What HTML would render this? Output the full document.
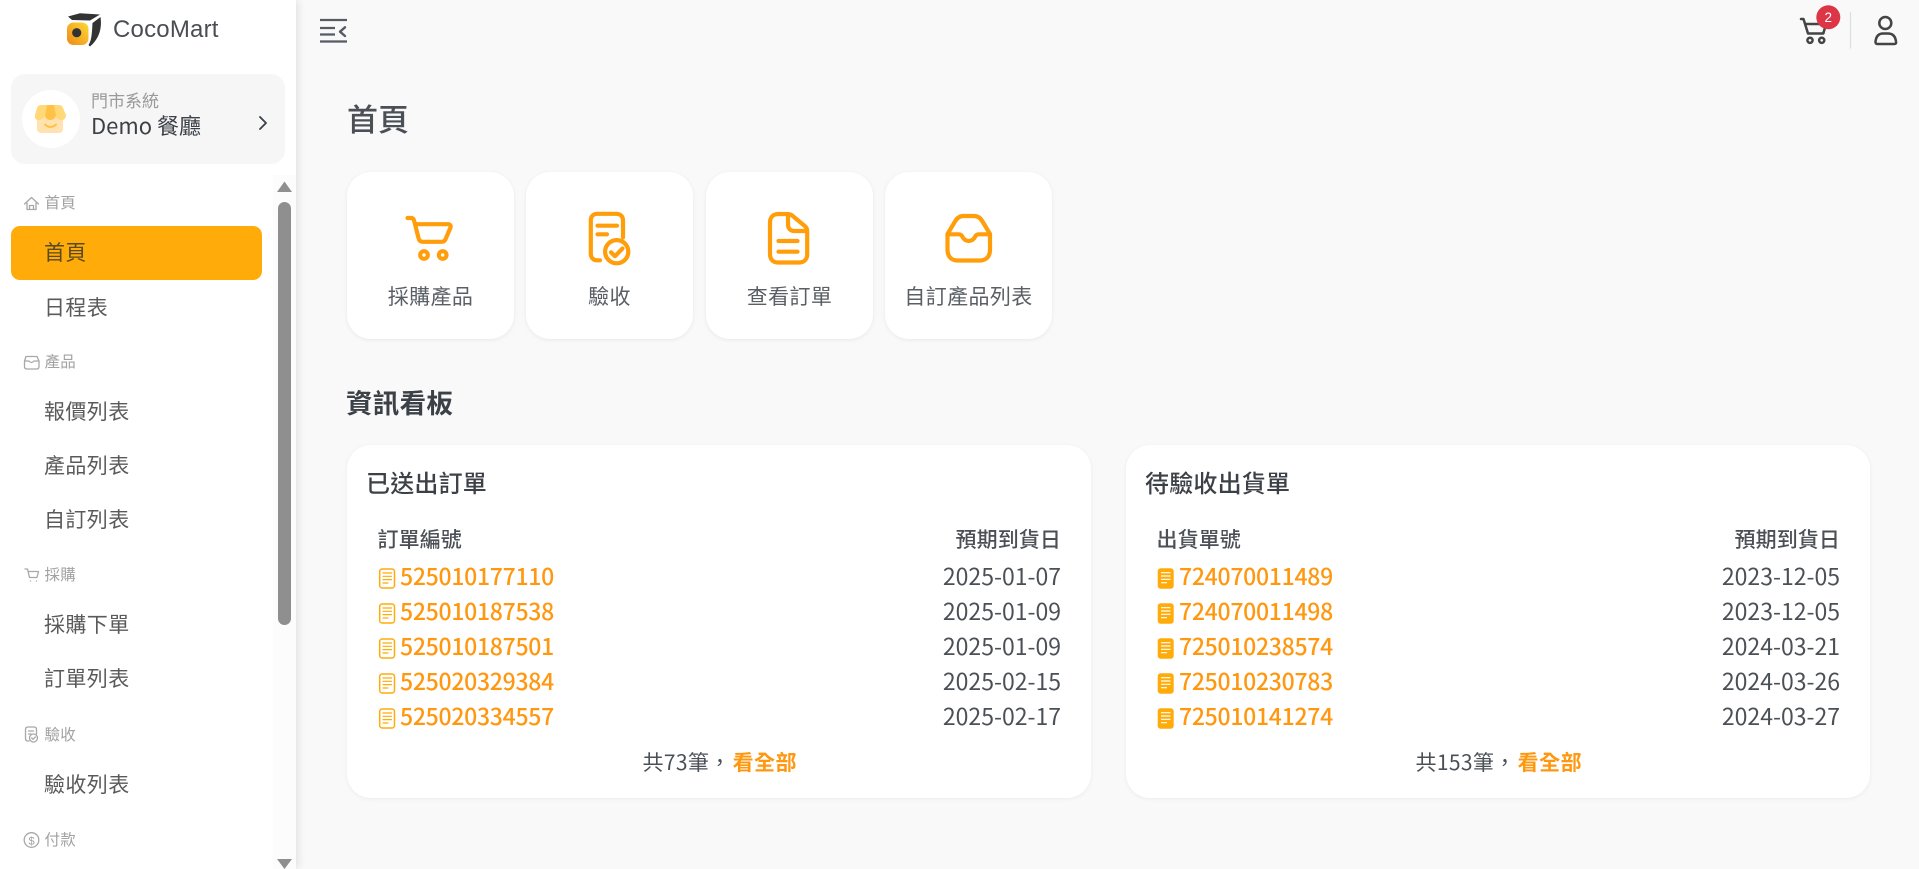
<!DOCTYPE html>
<html lang="zh-Hant"><head><meta charset="utf-8"><title>CocoMart</title>
<style>
html,body{margin:0;padding:0;width:1919px;height:869px;overflow:hidden;background:#f9f9f9}
body{font-family:"Noto Sans CJK TC","Liberation Sans",sans-serif;color:#4b5056;position:relative}
.b{position:absolute}
.t{position:absolute;white-space:nowrap;line-height:1;margin:0;font-weight:400}
.r{text-align:right}
.m{font-size:21px;color:#5a5a5a;left:44px;letter-spacing:.4px}
.h{font-size:15.5px;color:#a2a2a2;left:44.5px;letter-spacing:.2px}
.tile{position:absolute;top:172px;width:167px;height:167px;background:#fff;border-radius:24px;box-shadow:0 1px 4px rgba(0,0,0,.07)}
.l{font-size:21px;color:#5a5f65;top:286px;text-align:center;letter-spacing:.4px}
.card{position:absolute;top:445px;width:744px;height:353px;background:#fff;border-radius:24px;box-shadow:0 1px 5px rgba(0,0,0,.06)}
.ct{font-size:24px;color:#3c4147;font-weight:500;top:470px;letter-spacing:.2px}
.th{font-size:21px;color:#4b5056;top:529px;font-weight:500;letter-spacing:.1px}
.a{font-size:23px;color:#ff9810;letter-spacing:-.28px;font-weight:500}
.d{font-size:23px;color:#4b5056;width:160px}
</style></head><body>
<div class="b" style="left:0;top:0;width:296px;height:869px;background:#fff;box-shadow:2px 0 8px rgba(0,0,0,.1)"></div>
<div class="b" style="left:273px;top:175px;width:23px;height:694px;background:#fcfcfc"></div>
<div class="b" style="left:278px;top:202px;width:13px;height:423px;background:#8f8f8f;border-radius:7px"></div>
<div class="b" style="left:11px;top:74px;width:274px;height:90px;background:#f6f6f6;border-radius:14px"></div>
<div class="b" style="left:22px;top:90px;width:58px;height:58px;background:#fff;border-radius:50%"></div>
<div class="b" style="left:11px;top:226px;width:251px;height:54px;background:#ffab0a;border-radius:9px"></div>

<div class="t" style="left:113px;top:18px;font-size:24px;color:#4a4d52;font-family:'Liberation Sans',sans-serif;letter-spacing:.2px">CocoMart</div>
<div class="t" style="left:91px;top:91px;font-size:17px;color:#9a9a9a">門市系統</div>
<div class="t" style="left:91px;top:114px;font-size:22px;color:#3c4147">Demo 餐廳</div>

<div class="t h" style="top:195px">首頁</div>
<div class="t m" style="top:242px;color:#5a4a20">首頁</div>
<div class="t m" style="top:297px">日程表</div>
<div class="t h" style="top:354px">產品</div>
<div class="t m" style="top:401px">報價列表</div>
<div class="t m" style="top:455px">產品列表</div>
<div class="t m" style="top:509px">自訂列表</div>
<div class="t h" style="top:567px">採購</div>
<div class="t m" style="top:614px">採購下單</div>
<div class="t m" style="top:668px">訂單列表</div>
<div class="t h" style="top:727px">驗收</div>
<div class="t m" style="top:774px">驗收列表</div>
<div class="t h" style="top:832px">付款</div>

<div class="t" style="left:347px;top:102px;font-size:31px;color:#4b5056;font-weight:500">首頁</div>
<div class="tile" style="left:347px"></div><div class="tile" style="left:526px"></div><div class="tile" style="left:706px"></div><div class="tile" style="left:885px"></div>
<div class="t l" style="left:347px;width:167px">採購產品</div>
<div class="t l" style="left:526px;width:167px">驗收</div>
<div class="t l" style="left:706px;width:167px">查看訂單</div>
<div class="t l" style="left:885px;width:167px">自訂產品列表</div>

<div class="t" style="left:346px;top:389px;font-size:26.500px;color:#3c4147;font-weight:700;letter-spacing:.3px">資訊看板</div>

<div class="card" style="left:347px"></div><div class="card" style="left:1126px"></div>
<div class="t ct" style="left:366px">已送出訂單</div>
<div class="t ct" style="left:1145px">待驗收出貨單</div>
<div class="t th" style="left:377.500px">訂單編號</div>
<div class="t th r" style="left:861px;width:200px">預期到貨日</div>
<div class="t th" style="left:1156.500px">出貨單號</div>
<div class="t th r" style="left:1640px;width:200px">預期到貨日</div>

<div class="t a" style="left:400px;top:564px">525010177110</div>
<div class="t a" style="left:400px;top:599px">525010187538</div>
<div class="t a" style="left:400px;top:634px">525010187501</div>
<div class="t a" style="left:400px;top:669px">525020329384</div>
<div class="t a" style="left:400px;top:704px">525020334557</div>
<div class="t d r" style="left:901px;top:564px">2025-01-07</div>
<div class="t d r" style="left:901px;top:599px">2025-01-09</div>
<div class="t d r" style="left:901px;top:634px">2025-01-09</div>
<div class="t d r" style="left:901px;top:669px">2025-02-15</div>
<div class="t d r" style="left:901px;top:704px">2025-02-17</div>
<div class="t a" style="left:1179px;top:564px">724070011489</div>
<div class="t a" style="left:1179px;top:599px">724070011498</div>
<div class="t a" style="left:1179px;top:634px">725010238574</div>
<div class="t a" style="left:1179px;top:669px">725010230783</div>
<div class="t a" style="left:1179px;top:704px">725010141274</div>
<div class="t d r" style="left:1680px;top:564px">2023-12-05</div>
<div class="t d r" style="left:1680px;top:599px">2023-12-05</div>
<div class="t d r" style="left:1680px;top:634px">2024-03-21</div>
<div class="t d r" style="left:1680px;top:669px">2024-03-26</div>
<div class="t d r" style="left:1680px;top:704px">2024-03-27</div>
<div class="t" style="left:642.500px;top:752px;font-size:21px;color:#4b5056;letter-spacing:.35px">共73筆，<span style="color:#ff9810;font-weight:700;letter-spacing:.5px;margin-left:2px">看全部</span></div>
<div class="t" style="left:1415.500px;top:752px;font-size:21px;color:#4b5056;letter-spacing:.35px">共153筆，<span style="color:#ff9810;font-weight:700;letter-spacing:.5px;margin-left:2px">看全部</span></div>

<svg class="b" style="left:0;top:0" width="1919" height="869" viewBox="0 0 1919 869" fill="none" stroke-linecap="round" stroke-linejoin="round">
<defs>
<linearGradient id="g" x1="1" y1="0" x2="0" y2="1"><stop offset="0" stop-color="#fdd835"/><stop offset="1" stop-color="#ef8a17"/></linearGradient>
<g id="de"><rect x="379.700" y="569" width="14.800" height="19" rx="2.500" stroke="#ffab0a" stroke-width="1.500"/><path d="M383 573h8.500M383 576.300h8.500M383 579.600h8.500M383 583h5" stroke="#ffab0a" stroke-width="1.200"/></g>
<g id="df"><rect x="1157.700" y="568.300" width="16" height="20.500" rx="3" fill="#ffab0a"/><path d="M1161 572.700h9.500M1161 576h9.500M1161 579.300h9.500M1161 582.700h6" stroke="#fff" stroke-width="1.200" stroke-linecap="butt"/></g>
</defs>
<!-- logo -->
<rect x="67" y="22.500" width="21.500" height="22.500" rx="6.500" fill="url(#g)"/><circle cx="76.700" cy="32.700" r="4.600" fill="#333"/>
<path d="M68 16.500 80 13.300 100 14.500 90 20.500 72 20Z" fill="#333"/>
<path d="M100.500 17 C102 27 100 38 90 46.500 L88.500 45 C92 40 92 30 92.500 23Z" fill="#333"/>
<!-- store -->
<rect x="37" y="112" width="26" height="21" rx="4" fill="#ffe2b0"/>
<path d="M41 105H59Q62 105 63 108L66 115Q66 120 61 120Q57 120 56 116 54 120 50 120 46 120 45 116 43 120 39 120 34 120 35 115L37 108Q38 105 41 105Z" fill="#ffd877"/>
<path d="M47 105H54L56 116Q54 120 50.500 120 46.500 120 45 116Z" fill="#ffc247"/>
<path d="M45 124.500Q50.500 129.500 56 124.500" stroke="#ffc247" stroke-width="2"/>
<path d="M260 117l6 6-6 6" stroke="#3c4147" stroke-width="1.800"/>
<!-- scrollbar arrows -->
<path d="M284.500 181.500 292 192H277Z" fill="#8f8f8f"/><path d="M277 859H292L284.500 869Z" fill="#8f8f8f"/>
<!-- small section icons -->
<g stroke="#a8a8a8" stroke-width="1.300">
<path d="M24.500 204 31.500 197.500 38.500 204M27 202.500V209.500H36V202.500M29.500 209.500V205.500H33.500V209.500"/>
<path d="M26 356.500H37L39 361V366.500Q39 369 36.500 369H27Q24.500 369 24.500 366.500V361ZM24.500 361H29Q31.500 364 34 361H39"/>
<path d="M25 569H27.500L29.500 577.500H37L38.500 571.500H28M30.500 581v.1M36.500 581v.1"/>
<path d="M29 741H28Q25.500 741 25.500 738.500V729.500Q25.500 727 28 727H34Q36.500 727 36.500 729.500V734M28.500 731H33.500M28.500 734H31"/>
<circle cx="33.500" cy="738" r="4"/><path d="M31.700 738 33 739.300 35.300 737"/>
<circle cx="31.500" cy="840" r="7.300"/>
</g>
<text x="31.500" y="844.500" font-size="11" fill="#a0a0a0" text-anchor="middle" font-family="Liberation Sans">$</text>
<!-- top bar -->
<path d="M320 20H347M320 28H335M320 34.500H335M320 41.500H347" stroke="#555c64" stroke-width="2.200" stroke-linecap="butt"/>
<path d="M345 27.300 340 31.700 345 36" stroke="#555c64" stroke-width="2.400"/>
<g stroke="#444" stroke-width="2.500">
<path d="M1801 19H1803.500L1808 33.500H1823.300L1826 24H1806"/>
<circle cx="1810" cy="40.300" r="2.600"/><circle cx="1821.700" cy="40.300" r="2.600"/>
<circle cx="1885.300" cy="23" r="6"/>
<path d="M1877.500 44H1894.500Q1896.500 44 1896 41.500 1895 33.500 1888 33.500H1883Q1876.500 33.500 1875.500 41.500 1875.300 44 1877.500 44Z"/>
</g>
<circle cx="1828.300" cy="17.300" r="12" fill="#dc3545"/>
<text x="1828.300" y="22" font-size="13.500" fill="#fff" text-anchor="middle" font-family="Liberation Sans">2</text>
<path d="M1850.500 12.500V48" stroke="#dedede" stroke-width="1.200"/>
<!-- tile icons -->
<g stroke="#ff9d0a" stroke-width="4.200">
<path d="M407.500 218H411C413 218 413.700 219 414.200 221L418.500 238C419 240.500 420.500 241.800 423 241.800H441.500C443.500 241.800 445 240.800 445.700 238.800L450.500 227.500C451 225.500 450 224.200 448 224.200H416"/>
<circle cx="424" cy="255" r="3.800"/><circle cx="442.700" cy="255" r="3.800"/>
<path d="M600 260.300H597C593 260.300 590.800 257.500 590.800 253.500V220.500C590.800 216 593.500 213.800 597.500 213.800H616C620.500 213.800 623 216.500 623 220.500V237.500"/>
<path d="M597.500 225.700H617M597.500 234.300H607"/>
<circle cx="616.700" cy="251.700" r="11.600"/><path d="M611 252.300 615 256.200 622.500 248.500"/>
<path d="M778.500 214H787C789.500 214 791 214.500 792.500 215.800L804.500 225.800C806.500 227.500 807.200 229 807.200 231V254C807.200 259.500 804 262.500 799 262.500H778C773 262.500 770 259.500 770 254V222.500C770 217 773.500 214 778.500 214Z"/>
<path d="M788 214.500V224.500C788 228.500 790.500 231 794.500 231H807"/>
<path d="M778.500 241H797.500M778.500 251.700H797.500"/>
<path d="M947.500 234V250C947.500 256.500 951.500 260.500 957.500 260.500H980C986 260.500 990 256.500 990 250V234L982.500 221.500C980.500 218 978 216 974 216H963.500C959.500 216 957 218 955 221.500Z"/>
<path d="M947.500 234.300H959C960.700 234.300 961.500 235 962.300 236.500 963.500 239.300 966 241 968.700 241S974 239.300 975.200 236.500C976 235 976.800 234.300 978.500 234.300H990"/>
</g>
<!-- row icons -->
<use href="#de"/><use href="#de" y="35"/><use href="#de" y="70"/><use href="#de" y="105"/><use href="#de" y="140"/>
<use href="#df"/><use href="#df" y="35"/><use href="#df" y="70"/><use href="#df" y="105"/><use href="#df" y="140"/>
</svg>
</body></html>
